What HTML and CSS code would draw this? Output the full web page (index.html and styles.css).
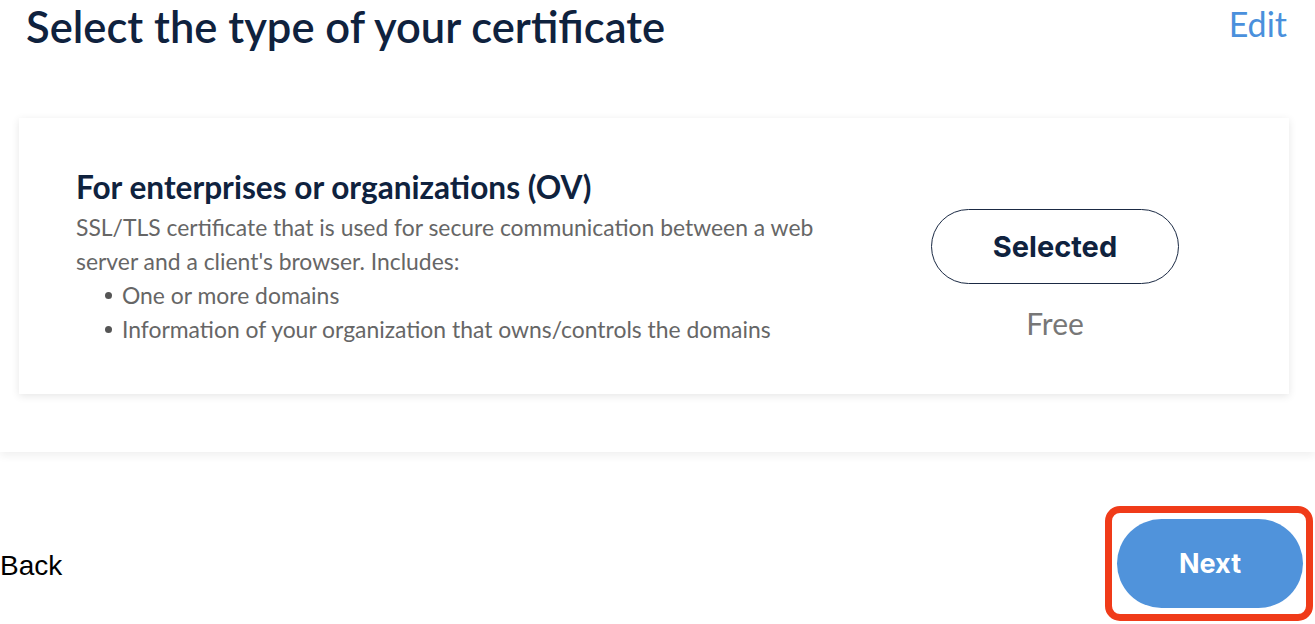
FILE: index.html
```html
<!DOCTYPE html>
<html>
<head>
<meta charset="utf-8">
<link rel="stylesheet" href="styles.css">
</head>
<body>
<div class="page">
  <section class="panel">
    <div class="panel-head">
      <h1 class="title">Select the type of your certificate</h1>
      <a class="edit">Edit</a>
    </div>
    <div class="card">
      <div class="card-info">
        <h2 class="card-title">For enterprises or organizations (OV)</h2>
        <p class="card-desc">SSL/TLS certificate that is used for secure communication between a web server and a client's browser. Includes:</p>
        <ul class="card-list">
          <li>One or more domains</li>
          <li>Information of your organization that owns/controls the domains</li>
        </ul>
      </div>
      <div class="card-action">
        <button class="btn-selected">Selected</button>
        <div class="price">Free</div>
      </div>
    </div>
  </section>
  <footer class="footer">
    <a class="back">Back</a>
    <div class="highlight">
      <button class="btn-next">Next</button>
    </div>
  </footer>
</div>
</body>
</html>
```
FILE: styles.css
```css
* { box-sizing: border-box; }
html, body { margin: 0; padding: 0; background: #fff; }
body { font-family: Lato, "Open Sans", sans-serif; overflow: hidden; }
.page { width: 1315px; height: 624px; }

.panel {
  height: 452px;
  background: #fff;
  box-shadow: 0 4px 8px rgba(0,0,0,0.06);
  position: relative;
  padding-top: 1px;
}
.panel-head {
  display: flex;
  justify-content: space-between;
  align-items: flex-start;
  padding: 0 28px 0 26px;
}
.title {
  margin: 1px 0 0 0;
  font-size: 43.5px;
  line-height: 48px;
  font-weight: 600;
  color: #0f223e;
  letter-spacing: 0;
}
.edit {
  margin-top: 3px;
  font-size: 34px;
  line-height: 40px;
  color: #4a90dc;
}

.card {
  margin: 68px 26px 0 19px;
  height: 276px;
  background: #fff;
  box-shadow: 0 2px 8px rgba(0,0,0,0.10);
  display: flex;
  justify-content: space-between;
  padding: 50px 110px 0 57px;
}
.card-title {
  margin: 0;
  font-size: 31.6px;
  line-height: 38px;
  font-weight: 700;
  color: #0f223e;
}
.card-desc {
  margin: 4px 0 0 0;
  width: 750px;
  font-size: 22.9px;
  line-height: 34px;
  color: #666;
}
.card-list {
  margin: 0;
  padding: 0 0 0 29px;
  list-style: none;
  font-size: 22.9px;
  line-height: 34px;
  color: #666;
}
.card-list li::before {
  content: "";
  display: inline-block;
  width: 7px;
  height: 7px;
  border-radius: 50%;
  background: #555;
  margin-right: 10px;
  vertical-align: 5px;
}
.card-action {
  display: flex;
  flex-direction: column;
  align-items: center;
  padding-top: 41px;
}
.btn-selected {
  width: 248px;
  height: 75px;
  border: 1px solid #1b2a44;
  border-radius: 38px;
  background: #fff;
  font-family: Inter, "Liberation Sans", sans-serif;
  font-size: 29px;
  font-weight: 700;
  color: #0f223e;
}
.price {
  margin-top: 21px;
  font-size: 30px;
  line-height: 36px;
  color: #777;
}

.footer {
  display: flex;
  justify-content: space-between;
  align-items: center;
  height: 172px;
  padding: 50px 2px 0 0;
}
.back {
  font-family: "Liberation Sans", Arial, sans-serif;
  font-size: 28px;
  color: #000;
  margin-top: 6px;
}
.highlight {
  border: 7px solid #f03b19;
  border-radius: 15px;
  padding: 6px 3px 6px 5px;
}
.btn-next {
  display: block;
  width: 186px;
  height: 89px;
  border: none;
  border-radius: 45px;
  background: #5093db;
  color: #fff;
  font-family: Inter, "Liberation Sans", sans-serif;
  font-size: 27px;
  font-weight: 700;
}
```
